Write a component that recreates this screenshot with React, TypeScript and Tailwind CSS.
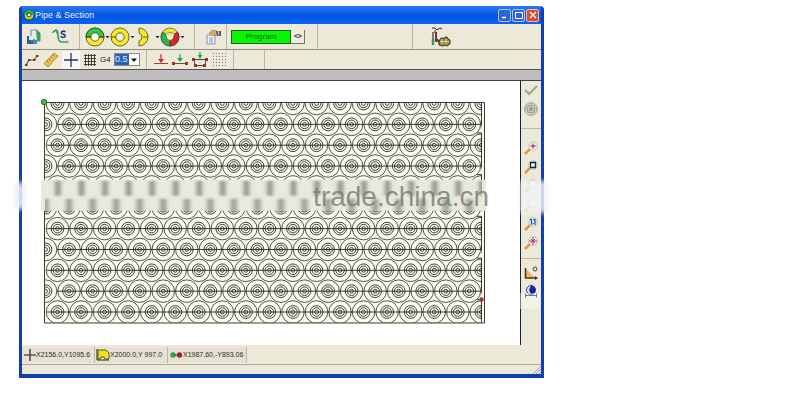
import type { ReactNode } from 'react';
import clsx from 'clsx';

const PITCH_X = 23.6;
const PITCH_Y = 20.9;
const rows = Array.from({ length: 11 }, (_, i) => i);
const cols = Array.from({ length: 20 }, (_, i) => i);

const rowY = (row: number) => 1.5 + row * PITCH_Y;
const colX = (row: number, col: number) => (row % 2 ? 1.5 : 13.5) + col * PITCH_X;

type ToolProps = { label: string; className?: string; children: ReactNode };

const Tool = ({ label, className, children }: ToolProps) => (
  <button aria-label={label} className={clsx('flex shrink-0 items-center justify-center', className)}>
    {children}
  </button>
);

const Separator = () => (
  <span className="w-px shrink-0 self-stretch border-l border-[#b9b6a6]" />
);

const Caret = () => (
  <svg viewBox="0 0 5 4" className="h-1 w-[5px]">
    <path d="M0.5 1h4L2.5 3.2z" fill="#222" />
  </svg>
);

const SaveIcon = () => (
  <svg viewBox="0 0 16 16" className="size-4">
    <path d="M5 1h6l3 3v8H5z" fill="#e6efdf" stroke="#6c8c80" />
    <path d="M10 1l4 3v8h-3z" fill="#3fa05c" />
    <path d="M1 7h4v5l3-2 2 2v3H1z" fill="#2b5f96" />
    <path d="M3 7h3v4H3z" fill="#dce9f2" />
    <path d="M7 11h4v4H7z" fill="#4f86b5" />
  </svg>
);

const CurveIcon = () => (
  <svg viewBox="0 0 18 18" className="size-[18px]" fill="none">
    <path d="M1 4l3-2c2 0 2 2 2 5s0 6 3 7h6" stroke="#35a055" strokeWidth="1.6" />
    <path d="M0 5l4-3 1 4" stroke="#35a055" />
    <path d="M13.5 4C12 2.5 9 3 9.3 4.8S13.5 6 13.3 8 10 9.8 8.5 8.3" stroke="#27358c" strokeWidth="1.6" />
    <circle cx="15.5" cy="14" r="1" fill="#cde" stroke="#567" strokeWidth=".5" />
  </svg>
);

const GreenRing = () => (
  <svg viewBox="0 0 20 20" className="size-5" stroke="#3b3a10" strokeWidth=".8">
    <circle cx="10" cy="10" r="9" fill="#f4ee2a" />
    <path d="M1 10a9 9 0 0 1 18 0z" fill="#27cf45" />
    <circle cx="10" cy="10" r="4.2" fill="#fdfdf0" />
    <path d="M1 10h5M14 10h5" />
  </svg>
);

const YellowRing = () => (
  <svg viewBox="0 0 20 20" className="size-5" stroke="#4b4610" strokeWidth=".8">
    <circle cx="10" cy="10" r="9" fill="#f4e92a" />
    <circle cx="10" cy="10" r="4.2" fill="#f3f0dc" />
    <path d="M1 10h5" strokeWidth="1.2" />
  </svg>
);

const HalfRing = () => (
  <svg viewBox="0 0 20 20" className="size-5" stroke="#4b4610" strokeWidth=".8">
    <path d="M4 1a9 9 0 0 1 0 18v-5a4.2 4.2 0 0 0 0-8z" fill="#f4e92a" />
    <path d="M8 10h5" />
  </svg>
);

const SectorRing = () => (
  <svg viewBox="0 0 20 20" className="size-5" stroke="#333" strokeWidth=".6">
    <circle cx="10" cy="10" r="9" fill="#eee22c" />
    <path d="M10 10L2.5 5A9 9 0 0 0 10 19z" fill="#2db64b" />
    <path d="M10 10l7.5-5A9 9 0 0 1 10 19z" fill="#d92523" />
    <path d="M5.5 7q4.5-3 9 0L13 12q-3 3-6 0z" fill="#f6f2df" />
    <path d="M6 6.5h8L10 11z" fill="#eee58a" stroke="none" />
  </svg>
);

const PropertiesIcon = () => (
  <svg viewBox="0 0 17 16" className="h-4 w-[17px]">
    <path d="M2 6h8v9H2z" fill="#f4f8fb" stroke="#7e93a8" />
    <path d="M4 9h4M4 11h4M4 13h4" stroke="#5e9ac4" />
    <path d="M4 4l4-3 4 1v4L8 7z" fill="#e9a457" stroke="#a56a2a" strokeWidth=".5" />
    <path d="M11 2h5v5h-4z" fill="#54627c" />
    <path d="M13 2h1v4h-1z" fill="#c0c8d4" />
  </svg>
);

const MachineIcon = () => (
  <svg viewBox="0 0 20 20" className="size-5" fill="none">
    <path d="M1 1h3l2 2 3-2 2 1M4 3v3" stroke="#222" />
    <path d="M2 5v7" stroke="#555" strokeWidth="1.5" />
    <path d="M5 5v10" stroke="#8d2a38" strokeWidth="2" />
    <path d="M2 12v6" stroke="#22a35a" strokeWidth="2.5" />
    <path d="M6 12l3 5" stroke="#333" strokeWidth="1.5" />
    <path d="M8 14l2-3h2l1 1 1-2h2l1 2 2 1v4l-3 2-2-1-2 1-4-1z" fill="#9a8f3f" stroke="#3c3717" />
    <path d="M11 12v5M15 12v5M9 14.5h9" stroke="#e8dfa0" strokeWidth=".8" />
  </svg>
);

const PolylineIcon = () => (
  <svg viewBox="0 0 16 14" className="h-3.5 w-4" fill="none">
    <path d="M2 12l3-5h5l3-4" stroke="#555" strokeWidth="1.2" />
    <path d="M1 11h2.5v2H1zM4 6h2.5v2H4zM9 6h2.5v2H9zM12 2h2.5v2H12z" fill="#8a2d20" />
  </svg>
);

const RulerIcon = () => (
  <svg viewBox="0 0 16 16" className="size-4">
    <path d="M1 11.5L11 1l4 3L5 15z" fill="#efc155" stroke="#b98a35" />
    <path d="M4 9l1.500 1.500M6 7l1.500 1.500M8 5l1.500 1.500M10 3l1.500 1.500" stroke="#7a5315" strokeWidth=".8" />
  </svg>
);

const GridIcon = () => (
  <svg viewBox="0 0 14 14" className="size-3.5">
    <path d="M2.5 1v12M5.5 1v12M8.5 1v12M11.5 1v12M1 2.5h12M1 5.5h12M1 8.5h12M1 11.5h12" stroke="#333" strokeWidth=".9" />
  </svg>
);

const InsertIcon = () => (
  <svg viewBox="0 0 14 14" className="size-3.5" fill="none">
    <path d="M0 10.5h14" stroke="#a33c34" />
    <path d="M7 1v7" stroke="#c12a2a" strokeWidth="1.2" />
    <path d="M4 6h6L7 10z" fill="#c12a2a" />
  </svg>
);

const InsertBetweenIcon = () => (
  <svg viewBox="0 0 16 14" className="h-3.5 w-4" fill="none">
    <path d="M1 10.5h14" stroke="#555" />
    <path d="M8 1v7" stroke="#25a53b" strokeWidth="1.2" />
    <path d="M5 5h6L8 9z" fill="#25a53b" />
    <path d="M0 9h3v3H0zM13 9h3v3h-3z" fill="#a33025" />
  </svg>
);

const InsertFrameIcon = () => (
  <svg viewBox="0 0 16 16" className="size-4" fill="none">
    <path d="M2 7.5h12l-1 6H3z" stroke="#444" />
    <path d="M8 0v5" stroke="#25a53b" strokeWidth="1.2" />
    <path d="M5.5 3h5L8 7z" fill="#25a53b" />
    <path d="M0 6h3v3H0zM13 6h3v3h-3zM2 12h3v3H2zM11 12h3v3h-3z" fill="#9c3028" />
  </svg>
);

const DotsIcon = () => (
  <svg viewBox="0 0 14 14" className="size-3.5">
    <path d="M1.5 0v14M4.5 0v14M7.5 0v14M10.5 0v14M13.5 0v14" stroke="#777" strokeDasharray="1 2" />
  </svg>
);

const Magnifier = ({ children }: { children?: ReactNode }) => (
  <svg viewBox="0 0 14 14" className="size-3.5" fill="none">
    <path d="M1 13l5-5" stroke="#dd9746" strokeWidth="2.5" />
    <circle cx="9" cy="5" r="4.3" fill="#eef2f6" stroke="#b9c0ca" />
    {children}
  </svg>
);

const Toolbar = () => (
  <div className="flex h-[26px] items-center border-b border-[#8f8d83]">
    <div className="flex items-center gap-2.5 pl-1 pr-[9px]">
      <Tool label="Save"><SaveIcon /></Tool>
      <Tool label="Curve"><CurveIcon /></Tool>
    </div>
    <Separator />
    <div className="flex items-center pl-[5px] pr-[9px]">
      <Tool label="Split ring"><GreenRing /><Caret /></Tool>
      <Tool label="Ring"><YellowRing /><Caret /></Tool>
      <Tool label="Half ring"><HalfRing /><Caret /></Tool>
      <Tool label="Sectors"><SectorRing /><Caret /></Tool>
    </div>
    <Separator />
    <div className="flex items-center pl-2.5 pr-1">
      <Tool label="Properties"><PropertiesIcon /></Tool>
    </div>
    <Separator />
    <div className="flex items-center pl-1 pr-3">
      <button className="h-3.5 w-[60px] border border-[#215c21] bg-[#08f400] text-[8px] leading-3 text-[#17661a]">
        Program
      </button>
      <Tool label="Select program" className="h-3.5 w-3.5 border-r border-b border-[#77756b] bg-[#efecdf]">
        <svg viewBox="0 0 10 6" className="h-1.5 w-2.5" fill="none" stroke="#444">
          <path d="M1 3q4-3 8 0M2 3.5q3 2 6 0" />
        </svg>
      </Tool>
    </div>
    <Separator />
    <div className="flex-[94]" />
    <Separator />
    <div className="flex flex-[109] pl-[18px]">
      <Tool label="Machine"><MachineIcon /></Tool>
    </div>
  </div>
);

const EditBar = () => (
  <div className="flex h-5 items-center border-b border-[#55534d]">
    <div className="flex items-center gap-[3px] pl-0.5 pr-1.5">
      <Tool label="Polyline"><PolylineIcon /></Tool>
      <Tool label="Ruler"><RulerIcon /></Tool>
      <Tool label="Crosshair" className="h-[18px] w-[18px] bg-[#f9f7ef]">
        <svg viewBox="0 0 14 14" className="size-3.5">
          <path d="M7 0v14M0 7h14" stroke="#26306f" strokeWidth="1.3" />
        </svg>
      </Tool>
      <Tool label="Grid"><GridIcon /></Tool>
      <label htmlFor="step" className="w-[11px] text-[8px] leading-3 text-[#222]">G4</label>
      <span className="flex h-[13px] items-center border border-[#7c8a99] bg-white">
        <select id="step" defaultValue="0.5" className="h-[11px] w-3.5 appearance-none bg-[#2c63b4] text-[9px] leading-[11px] text-[#dfe9f7]">
          <option>0.5</option>
        </select>
        <svg viewBox="0 0 10 8" className="pointer-events-none h-2 w-2.5">
          <path d="M2 2.5h6L5 6z" fill="#111" />
        </svg>
      </span>
    </div>
    <Separator />
    <div className="flex items-center gap-1 pl-[7px] pr-[7px]">
      <Tool label="Insert point"><InsertIcon /></Tool>
      <Tool label="Insert between"><InsertBetweenIcon /></Tool>
      <Tool label="Insert frame"><InsertFrameIcon /></Tool>
      <Tool label="Snap dots"><DotsIcon /></Tool>
    </div>
    <Separator />
    <div className="w-[30px]" />
    <Separator />
  </div>
);

const Nesting = () => (
  <svg viewBox="0 0 442 222" className="block w-full overflow-visible" fill="none">
    <defs>
      <clipPath id="sheet">
        <path d="M1 1h438v220H1z" />
      </clipPath>
      <filter id="soft" x="-100%" width="300%">
        <feGaussianBlur stdDeviation="2 1" />
      </filter>
    </defs>
    <path d="M.5.5h441v221H.5z" fill="#fafbed" stroke="#3a3a34" />
    <g clipPath="url(#sheet)" stroke="#2a2a25" strokeWidth=".9">
      {rows.map((row) => (
        <g key={row}>
          {row > 0 && (
            <path d={`M${row % 2 ? 13 : 3} ${rowY(row)}H439`} stroke="#22221e" />
          )}
          {cols.map((col) => (
            <g key={col}>
              <circle cx={colX(row, col)} cy={rowY(row)} r="11.3" strokeWidth=".8" />
              <circle cx={colX(row, col)} cy={rowY(row)} r="6.4" />
              <circle cx={colX(row, col)} cy={rowY(row)} r="4.3" />
              <circle cx={colX(row, col)} cy={rowY(row)} r="1.9" />
            </g>
          ))}
        </g>
      ))}
      {[0, 1, 2, 3, 4].map((i) => (
        <path key={i} d={`M434 ${31 + i * 41.8}h4.5v33`} stroke="#22221e" />
      ))}
      <path d="M438.5 1v21" stroke="#22221e" />
    </g>
    {/* washed-out strip across the middle rows */}
    <path d="M-3 78h446v31H-3z" fill="#e9eadf" />
    <g clipPath="url(#sheet)">
      {cols.map((col) => (
        <g key={col} fill="#777970" filter="url(#soft)">
          <path d={`M${colX(0, col) - 2} 79h5v15h-5z`} opacity=".85" />
          <path d={`M${colX(1, col) - 3} 97h6v13h-6z`} opacity=".7" />
        </g>
      ))}
    </g>
    <circle cx="0" cy="0" r="2.7" fill="#42bd4b" stroke="#22702b" />
    <circle cx="438.5" cy="198" r="2.2" fill="#b0282e" />
  </svg>
);

const SideTools = () => (
  <div className="flex w-[21px] shrink-0 flex-col items-center border-l border-[#1d1d3c] bg-[#ece9d8] pt-0.5">
    <Tool label="Accept">
      <svg viewBox="0 0 14 14" className="size-3.5" fill="none">
        <path d="M1 7l4 4 8-8" stroke="#a3a195" strokeWidth="2" />
      </svg>
    </Tool>
    <Tool label="Target" className="mt-[5px]">
      <svg viewBox="0 0 14 14" className="size-3.5" fill="none" stroke="#97958c">
        <circle cx="7" cy="7" r="6.3" fill="#d6d4c8" />
        <circle cx="7" cy="7" r="4" />
        <circle cx="7" cy="7" r="1.8" fill="#aaa89d" />
      </svg>
    </Tool>
    <span className="mt-3 w-full border-t border-[#bbb8a8]" />
    <Tool label="Zoom in" className="mt-3">
      <Magnifier><path d="M9 2.5v5M6.5 5h5" stroke="#b8386a" strokeWidth="1.3" /></Magnifier>
    </Tool>
    <Tool label="Zoom window" className="mt-[5px]">
      <Magnifier><path d="M6.5 2.5h5v5h-5z" stroke="#222" strokeWidth="1.3" /></Magnifier>
    </Tool>
    <Tool label="Zoom out" className="mt-[5px]"><Magnifier /></Tool>
    <Tool label="Zoom all" className="mt-[5px]"><Magnifier /></Tool>
    <Tool label="Zoom actual size" className="mt-[5px]">
      <Magnifier><path d="M7.5 2v6M11 2v6M6 3l1-1M9.5 3l1-1M9.2 6v1" stroke="#25629c" strokeWidth="1.3" /></Magnifier>
    </Tool>
    <Tool label="Pan" className="mt-[5px]">
      <Magnifier><path d="M9 1v8M5 5h8M7 3l4 4M11 3L7 7" stroke="#b33a5c" /></Magnifier>
    </Tool>
    <span className="mt-2 w-full border-t border-[#bbb8a8]" />
    <Tool label="Angle" className="mt-[7px]">
      <svg viewBox="0 0 14 14" className="size-3.5" fill="none">
        <path d="M2 3l9 9H2z" fill="#edb660" />
        <path d="M1.5 2v10h11" stroke="#4d3311" strokeWidth="1.5" />
        <circle cx="11" cy="3" r="2" stroke="#444" />
        <path d="M11 10l3 2-3 2z" fill="#4d3311" />
      </svg>
    </Tool>
    <Tool label="Centre of mass" className="mt-[5px]">
      <svg viewBox="0 0 14 14" className="size-3.5" fill="none">
        <circle cx="7" cy="5" r="4.5" fill="#dfe3f4" stroke="#3a3aa2" />
        <path d="M7 .5a4.5 4.5 0 0 1 0 9L5 5z" fill="#20209a" />
        <path d="M1 10.5h12M1.5 8.5v4M12.5 8.5v4" stroke="#15154a" />
      </svg>
    </Tool>
  </div>
);

const StatusBar = () => (
  <div className="flex h-[19px] items-center text-[7px] leading-4 text-[#2e2d2a]">
    <div className="flex h-4 w-[73px] items-center border-r border-[#bdb9aa] bg-[#e5e1d3] pl-0.5 whitespace-nowrap">
      <svg viewBox="0 0 12 12" className="size-3 shrink-0">
        <path d="M6 0v12M0 6h12" stroke="#2d1b26" strokeWidth="1.2" />
      </svg>
      X2156.0,Y1095.6
    </div>
    <div className="flex h-4 w-[73px] items-center border-r border-[#bdb9aa] bg-[#e5e1d3] pl-px whitespace-nowrap">
      <svg viewBox="0 0 14 12" className="h-3 w-3.5 shrink-0" fill="none">
        <path d="M1 0v11h12" stroke="#222" />
        <path d="M2 1h8l3 3v6H9l-1-2H5l-1 2H2z" fill="#f0df27" stroke="#5b5410" />
      </svg>
      X2000.0,Y 997.0
    </div>
    <div className="flex h-4 w-[79px] items-center border-r border-[#bdb9aa] bg-[#e5e1d3] pl-px whitespace-nowrap">
      <svg viewBox="0 0 14 8" className="h-2 w-3.5 shrink-0">
        <circle cx="4" cy="4" r="2.7" fill="#2ba344" />
        <path d="M6 4h3" stroke="#333" />
        <circle cx="10.5" cy="4" r="2.7" fill="#a91f2b" />
      </svg>
      X1987.60,-Y893.06
    </div>
  </div>
);

const TitleBar = () => (
  <header className="flex h-[18px] items-center bg-linear-to-b from-[#2c7bf2] via-[#0655e2] to-[#0863f4] pl-px pr-0.5">
    <svg viewBox="0 0 12 12" className="size-3 shrink-0">
      <circle cx="6" cy="6" r="5" fill="#dcd928" stroke="#1b3d28" />
      <path d="M1 6a5 5 0 0 1 10 0z" fill="#2db14a" />
      <circle cx="6" cy="6" r="2" fill="#fff" stroke="#1b3d28" />
    </svg>
    <h1 className="grow text-[9px] leading-4 text-[#e6effd]">Pipe &amp; Section</h1>
    <div className="flex gap-px">
      <Tool label="Minimize" className="size-[13px] rounded-xs border border-[#a9c4f3] bg-[#2f63d6]">
        <svg viewBox="0 0 10 10" className="size-2.5"><path d="M2 7.5h4" stroke="#fff" strokeWidth="1.5" /></svg>
      </Tool>
      <Tool label="Maximize" className="size-[13px] rounded-xs border border-[#a9c4f3] bg-[#2f63d6]">
        <svg viewBox="0 0 10 10" className="size-2.5" fill="none" stroke="#fff"><path d="M1.5 2.5h7v6h-7zM1 2.5h8" /></svg>
      </Tool>
      <Tool label="Close" className="size-[13px] rounded-xs border border-[#edb9aa] bg-[#d9502f]">
        <svg viewBox="0 0 10 10" className="size-2.5"><path d="M2 2l6 6M8 2L2 8" stroke="#fff" strokeWidth="1.4" /></svg>
      </Tool>
    </div>
  </header>
);

export default function App() {
  return (
    <div className="min-h-screen bg-white pt-1.5 font-['Liberation_Sans',Arial,sans-serif]">
      <div className="relative ml-[19px] w-21/32">
        <div className="overflow-hidden rounded-t-sm border-x-3 border-b-4 border-[#123fae] bg-[#ece9d8]">
          <TitleBar />
          <Toolbar />
          <EditBar />
          <div className="h-[11px] border-b border-[#3d3e55] bg-[#bfbdbe]" />
          <div className="flex">
            <main className="grow bg-white pt-[21px] pr-[35px] pb-[22px] pl-[22px]">
              <Nesting />
            </main>
            <SideTools />
          </div>
          <StatusBar />
          <div className="flex h-2.5 justify-end border-t border-[#b5a99b]">
            <svg viewBox="0 0 9 9" className="size-[9px]" stroke="#8d9dd0">
              <path d="M1 9l8-8M4 9l5-5M7 9l2-2" />
            </svg>
          </div>
        </div>
        {/* faded patches and the site mark over the window */}
        <div className="pointer-events-none absolute top-[176px] -left-1 h-7 w-2.5 rounded-full bg-[#e9ecfa]/90 blur-[2px]" />
        <div className="pointer-events-none absolute top-[175px] -right-1 h-8 w-7 bg-[#f1f2f5]/85 blur-[2px]" />
        <div className="pointer-events-none absolute top-[287px] right-1 h-4 w-5 bg-white/40" />
        <p className="pointer-events-none absolute top-[175px] right-[55px] text-[28px] leading-8 text-[#777770]/80">
          trade.china.cn
        </p>
      </div>
    </div>
  );
}
